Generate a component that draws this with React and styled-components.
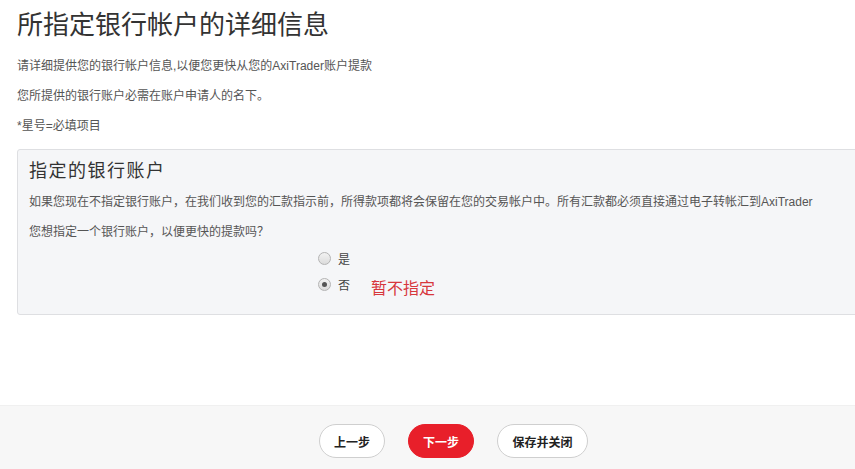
import React from "react";
import styled, { createGlobalStyle } from "styled-components";

const Global = createGlobalStyle`
  html, body { margin: 0; padding: 0; background: #fff; overflow: hidden; }
  body { font-family: "Liberation Sans", "Noto Sans CJK SC", sans-serif; color: #555; }
  * { box-sizing: border-box; }
`;

const Page = styled.div`
  width: 907px;
  min-height: 100vh;
  display: flex;
  flex-direction: column;
`;

const Content = styled.div`
  padding: 8px 17px 0;
`;

const Title = styled.h1`
  margin: 0;
  font-size: 26px;
  line-height: 34px;
  font-weight: normal;
  color: #333;
`;

const Para = styled.p`
  margin: ${(p) => (p.$first ? "14px" : "10px")} 0 0;
  font-size: 12px;
  line-height: 20px;
  color: #555;
`;

const Panel = styled.section`
  margin-top: 13px;
  background: #f5f6f8;
  border: 1px solid #dedfe2;
  border-radius: 3px;
  padding: 8px 11px 17px;
`;

const PanelTitle = styled.h2`
  margin: 0;
  font-size: 18px;
  line-height: 26px;
  font-weight: normal;
  letter-spacing: 1.5px;
  color: #333;
`;

const PanelText = styled.p`
  margin: ${(p) => (p.$first ? "8px" : "10px")} 0 0;
  font-size: 12px;
  line-height: 20px;
  color: #555;
`;

const RadioGroup = styled.div`
  margin: 3px 0 0 289px;
  display: flex;
  flex-direction: column;
`;

const RadioRow = styled.label`
  display: flex;
  align-items: center;
  height: 26px;
  font-size: 12px;
  color: #444;
`;

const Circle = styled.span`
  width: 13px;
  height: 13px;
  border-radius: 50%;
  border: 1px solid #b4b4b4;
  background: linear-gradient(#f2f2f2, #dcdcdc);
  display: inline-flex;
  align-items: center;
  justify-content: center;
  margin-right: 7px;
  &::after {
    content: "";
    width: 5px;
    height: 5px;
    border-radius: 50%;
    background: ${(p) => (p.$checked ? "#555" : "transparent")};
  }
`;

const Note = styled.span`
  margin-left: 21px;
  font-size: 16px;
  color: #d7373c;
  position: relative;
  top: 3px;
`;

const Footer = styled.footer`
  margin-top: auto;
  height: 64px;
  background: #f7f7f7;
  border-top: 1px solid #f0f0f0;
  display: flex;
  justify-content: center;
  align-items: flex-start;
  gap: 23px;
  padding-top: 18px;
`;

const Button = styled.button`
  height: 34px;
  min-width: ${(p) => p.$w || 65}px;
  border-radius: 17px;
  border: 1px solid ${(p) => (p.$primary ? "#e81f2a" : "#cfcfcf")};
  background: ${(p) => (p.$primary ? "#e81f2a" : "#fff")};
  color: ${(p) => (p.$primary ? "#fff" : "#222")};
  font-family: "Liberation Sans", "Noto Sans CJK SC", sans-serif;
  font-size: 12px;
  font-weight: bold;
  padding: 0 14px;
  cursor: pointer;
`;

export default function App() {
  return (
    <Page>
      <Global />
      <Content>
        <Title>所指定银行帐户的详细信息</Title>
        <Para $first>请详细提供您的银行帐户信息,以便您更快从您的AxiTrader账户提款</Para>
        <Para>您所提供的银行账户必需在账户申请人的名下。</Para>
        <Para>*星号=必填项目</Para>
        <Panel>
          <PanelTitle>指定的银行账户</PanelTitle>
          <PanelText $first>
            如果您现在不指定银行账户，在我们收到您的汇款指示前，所得款项都将会保留在您的交易帐户中。所有汇款都必须直接通过电子转帐汇到AxiTrader
          </PanelText>
          <PanelText>您想指定一个银行账户，以便更快的提款吗？</PanelText>
          <RadioGroup>
            <RadioRow>
              <Circle />
              是
            </RadioRow>
            <RadioRow>
              <Circle $checked />
              否
              <Note>暂不指定</Note>
            </RadioRow>
          </RadioGroup>
        </Panel>
      </Content>
      <Footer>
        <Button>上一步</Button>
        <Button $primary>下一步</Button>
        <Button $w={91}>保存并关闭</Button>
      </Footer>
    </Page>
  );
}
